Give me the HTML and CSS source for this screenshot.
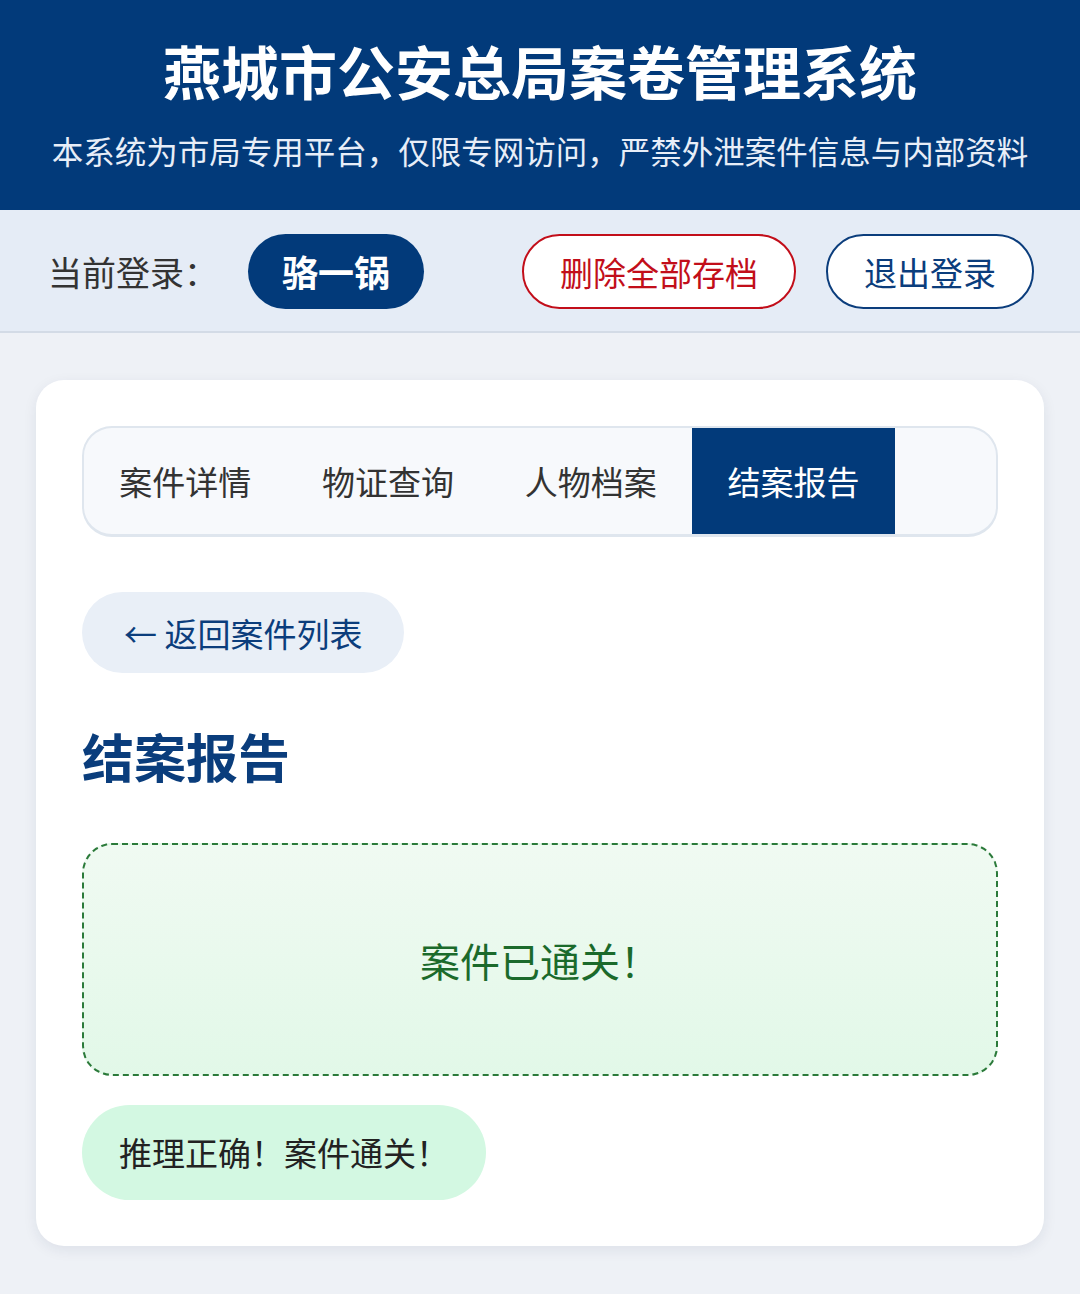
FILE: index.html
```html
<!DOCTYPE html>
<html lang="zh-CN">
<head>
    <meta charset="UTF-8">
    <meta name="viewport" content="width=device-width, initial-scale=1.0">
    <title>燕城市公安总局案卷管理系统</title>
    <link rel="stylesheet" href="styles.css">
</head>
<body>
    <header class="site-header">
        <h1>燕城市公安总局案卷管理系统</h1>
        <p>本系统为市局专用平台，仅限专网访问，严禁外泄案件信息与内部资料</p>
    </header>

    <div class="user-bar">
        <div class="user-info">
            <span class="user-label">当前登录：</span>
            <span class="user-name">骆一锅</span>
        </div>
        <div class="user-actions">
            <button class="btn btn-danger">删除全部存档</button>
            <button class="btn btn-outline">退出登录</button>
        </div>
    </div>

    <main class="page">
        <div class="card">
            <nav class="tabs">
                <a class="tab">案件详情</a>
                <a class="tab">物证查询</a>
                <a class="tab">人物档案</a>
                <a class="tab active">结案报告</a>
            </nav>

            <button class="back-btn">← 返回案件列表</button>

            <h2 class="section-title">结案报告</h2>

            <div class="report-box">
                <span>案件已通关！</span>
            </div>

            <div class="result-pill">推理正确！案件通关！</div>
        </div>
    </main>
</body>
</html>
```

FILE: styles.css
```css
* {
    box-sizing: border-box;
}
body {
    margin: 0;
    font-family: "Noto Sans CJK SC", "Noto Sans", sans-serif;
    background-color: #eef1f6;
    color: #222;
}
.site-header {
    background-color: #023a7a;
    color: white;
    text-align: center;
    padding: 30px 20px 40px;
}
.site-header h1 {
    margin: 0;
    font-size: 58px;
    line-height: 80px;
    font-weight: 700;
}
.site-header p {
    margin: 20px 0 0;
    font-size: 31.5px;
    line-height: 40px;
    color: #e8eef8;
    white-space: nowrap;
}
.user-bar {
    display: flex;
    justify-content: space-between;
    align-items: center;
    background-color: #e5ecf6;
    border-bottom: 2px solid #d3dbe6;
    padding: 24px 46px 22px 48px;
}
.user-info {
    display: flex;
    align-items: center;
}
.user-label {
    font-size: 34px;
    color: #333;
    margin-right: 30px;
}
.user-name {
    background-color: #023a7a;
    color: white;
    font-weight: 700;
    font-size: 36px;
    line-height: 75px;
    height: 75px;
    padding: 0 34px;
    border-radius: 38px;
}
.user-actions {
    display: flex;
    gap: 30px;
}
.btn {
    font-family: inherit;
    font-size: 33px;
    height: 75px;
    padding: 0 36px;
    border-radius: 38px;
    background: white;
    cursor: pointer;
}
.btn-danger {
    color: #c20e1a;
    border: 2px solid #c20e1a;
}
.btn-outline {
    color: #0b3d7c;
    border: 2px solid #0b3d7c;
}
.page {
    padding: 47px 36px 48px;
}
.card {
    background: white;
    border-radius: 28px;
    padding: 46px;
    box-shadow: 0 4px 14px rgba(20, 40, 80, 0.08);
}
.tabs {
    display: flex;
    background-color: #f7f9fc;
    border: 2px solid #dfe6ee;
    border-bottom-width: 3px;
    border-radius: 30px;
    overflow: hidden;
    height: 111px;
}
.tab {
    font-size: 33px;
    line-height: 106px;
    padding: 0 35px;
    color: #333;
    width: 202.7px;
    text-align: center;
    white-space: nowrap;
}
.tab.active {
    background-color: #023a7a;
    color: white;
}
.back-btn {
    display: block;
    margin-top: 55px;
    font-family: inherit;
    font-size: 33px;
    color: #0b3d7c;
    background-color: #e9eff7;
    border: none;
    height: 81px;
    padding: 0 42px;
    border-radius: 41px;
    cursor: pointer;
}
.section-title {
    margin: 52px 0 0;
    font-size: 52px;
    line-height: 62px;
    font-weight: 700;
    color: #0a3d7c;
}
.report-box {
    margin-top: 56px;
    height: 233px;
    display: flex;
    align-items: center;
    justify-content: center;
    border: 2px dashed #2b7a3a;
    border-radius: 30px;
    background: linear-gradient(180deg, #f0faf2 0%, #e2f8e8 100%);
    color: #1b6a2b;
    font-size: 40px;
}
.result-pill {
    display: inline-block;
    margin-top: 29px;
    background-color: #d3f8e2;
    color: #222;
    font-size: 33px;
    line-height: 95px;
    padding: 0 37px;
    border-radius: 48px;
}
```
